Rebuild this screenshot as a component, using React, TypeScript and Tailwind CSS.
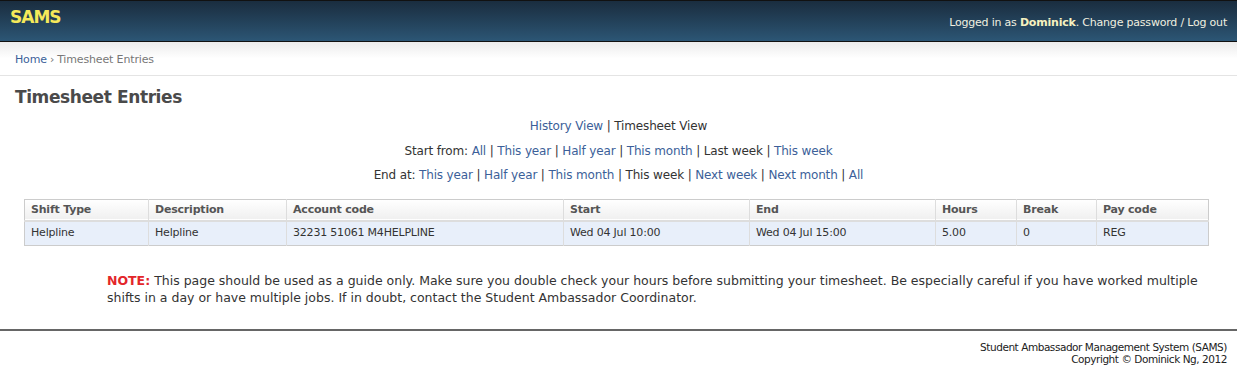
import React from 'react';

const font = { fontFamily: '"DejaVu Sans", Verdana, sans-serif' };

function Sep() {
  return <span className="text-[#333]"> | </span>;
}

function Link({ children }: { children: React.ReactNode }) {
  return <a className="text-[#3c5f99] cursor-pointer">{children}</a>;
}

const columns = [
  { label: 'Shift Type', w: 'w-[124px]' },
  { label: 'Description', w: 'w-[138px]' },
  { label: 'Account code', w: 'w-[277px]' },
  { label: 'Start', w: 'w-[186px]' },
  { label: 'End', w: 'w-[186px]' },
  { label: 'Hours', w: 'w-[81px]' },
  { label: 'Break', w: 'w-[80px]' },
  { label: 'Pay code', w: '' },
];

const row = ['Helpline', 'Helpline', '32231 51061 M4HELPLINE', 'Wed 04 Jul 10:00', 'Wed 04 Jul 15:00', '5.00', '0', 'REG'];

export default function App() {
  return (
    <div className="w-[1237px] h-[372px] bg-white text-[#333] text-[12px] tracking-[-0.15px]" style={font}>
      {/* header */}
      <div className="h-[42px] border-t border-b border-[#111] bg-gradient-to-b from-[#1a2d3f] to-[#2c5675] flex items-start justify-between px-[10px]">
        <div className="text-[#f5e95a] text-[17px] font-bold pt-[4px] tracking-[-1px]">SAMS</div>
        <div className="text-[#f0f0e0] text-[11px] pt-[14px] tracking-[-0.2px]">
          Logged in as <span className="font-bold text-[#f6f2c0]">Dominick</span>. Change password / Log out
        </div>
      </div>

      {/* breadcrumbs */}
      <div className="h-[34px] bg-gradient-to-b from-[#ececec] via-white to-white border-b border-[#e4e4e4] flex items-center px-[15px] text-[11px] text-[#777] pt-[3px]">
        <Link>Home</Link>
        <span className="mx-[3px] text-[#777]">›</span>
        <span>Timesheet Entries</span>
      </div>

      <div className="px-[15px]">
        <h1 className="text-[17px] font-bold text-[#4a4a4a] pt-[11px] leading-[20px] tracking-[-0.4px]">Timesheet Entries</h1>

        <div className="flex flex-col items-center leading-[15px] text-[12px]">
          <div className="mt-[12px]">
            <Link>History View</Link>
            <Sep />
            <span>Timesheet View</span>
          </div>
          <div className="mt-[10px]">
            Start from: <Link>All</Link>
            <Sep />
            <Link>This year</Link>
            <Sep />
            <Link>Half year</Link>
            <Sep />
            <Link>This month</Link>
            <Sep />
            <span>Last week</span>
            <Sep />
            <Link>This week</Link>
          </div>
          <div className="mt-[9px]">
            End at: <Link>This year</Link>
            <Sep />
            <Link>Half year</Link>
            <Sep />
            <Link>This month</Link>
            <Sep />
            <span>This week</span>
            <Sep />
            <Link>Next week</Link>
            <Sep />
            <Link>Next month</Link>
            <Sep />
            <Link>All</Link>
          </div>
        </div>

        <table className="mt-[16px] ml-[9px] w-[1185px] border border-[#ccc] border-collapse text-[11px] tracking-[-0.2px] table-fixed">
          <thead>
            <tr className="bg-gradient-to-b from-white to-[#f0f0f0] border-b-2 border-[#ddd]">
              {columns.map((c) => (
                <th key={c.label} className={`${c.w} text-left font-bold text-[#555] px-[6px] h-[21px] border-r border-[#ddd] last:border-r-0`}>
                  {c.label}
                </th>
              ))}
            </tr>
          </thead>
          <tbody>
            <tr className="bg-[#e8effa]">
              {row.map((v, i) => (
                <td key={i} className="px-[6px] h-[25px] border-r border-[#ddd] last:border-r-0 text-[#333]">
                  {v}
                </td>
              ))}
            </tr>
          </tbody>
        </table>

        <p className="mt-[26px] ml-[92px] w-[1120px] text-[12.5px] leading-[17px] tracking-normal text-[#333]">
          <b className="text-[#e3262a]">NOTE:</b> This page should be used as a guide only. Make sure you double check your hours before submitting your timesheet. Be especially careful if you have worked multiple shifts in a day or have multiple jobs. If in doubt, contact the Student Ambassador Coordinator.
        </p>
      </div>

      <div className="mt-[23px] border-t-2 border-[#666] pt-[10px] pr-[10px] text-right text-[10.5px] leading-[12px] tracking-[-0.45px] text-[#222]">
        <div>Student Ambassador Management System (SAMS)</div>
        <div>Copyright © Dominick Ng, 2012</div>
      </div>
    </div>
  );
}
